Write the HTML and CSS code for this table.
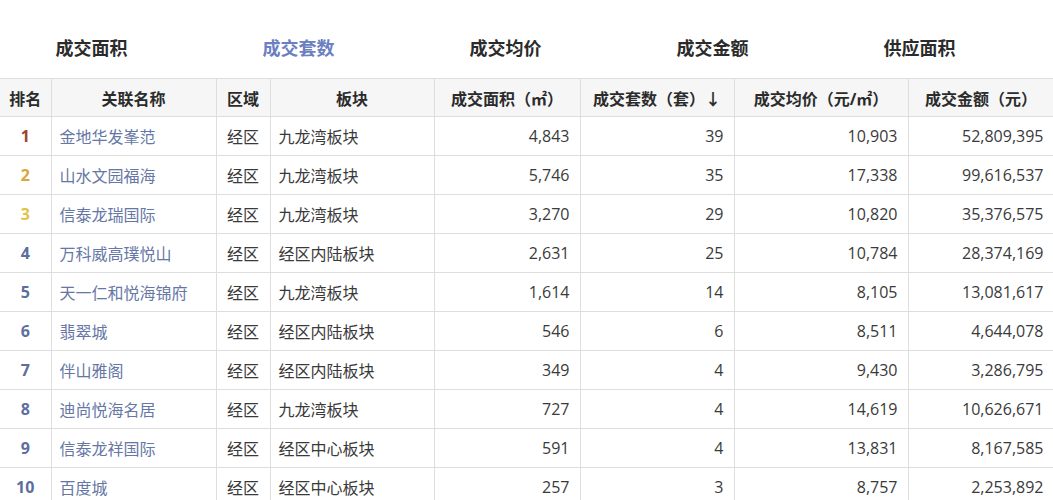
FILE: index.html
```html
<!DOCTYPE html>
<html lang="zh">
<head>
<meta charset="utf-8">
<link rel="stylesheet" href="styles.css">
</head>
<body>
<div class="page">
  <div class="tabs">
    <div class="tab">成交面积</div>
    <div class="tab active">成交套数</div>
    <div class="tab">成交均价</div>
    <div class="tab">成交金额</div>
    <div class="tab">供应面积</div>
  </div>
  <table class="grid">
    <colgroup>
      <col class="c1"><col class="c2"><col class="c3"><col class="c4"><col class="c5"><col class="c6"><col class="c7"><col class="c8">
    </colgroup>
    <thead>
      <tr>
        <th>排名</th><th>关联名称</th><th>区域</th><th>板块</th>
        <th>成交面积（㎡）</th><th>成交套数（套）↓</th><th>成交均价（元/㎡）</th><th>成交金额（元）</th>
      </tr>
    </thead>
    <tbody>
      <tr><td class="rank r1">1</td><td class="name">金地华发峯范</td><td class="area">经区</td><td>九龙湾板块</td><td class="num">4,843</td><td class="num">39</td><td class="num">10,903</td><td class="num">52,809,395</td></tr>
      <tr><td class="rank r2">2</td><td class="name">山水文园福海</td><td class="area">经区</td><td>九龙湾板块</td><td class="num">5,746</td><td class="num">35</td><td class="num">17,338</td><td class="num">99,616,537</td></tr>
      <tr><td class="rank r3">3</td><td class="name">信泰龙瑞国际</td><td class="area">经区</td><td>九龙湾板块</td><td class="num">3,270</td><td class="num">29</td><td class="num">10,820</td><td class="num">35,376,575</td></tr>
      <tr><td class="rank">4</td><td class="name">万科威高璞悦山</td><td class="area">经区</td><td>经区内陆板块</td><td class="num">2,631</td><td class="num">25</td><td class="num">10,784</td><td class="num">28,374,169</td></tr>
      <tr><td class="rank">5</td><td class="name">天一仁和悦海锦府</td><td class="area">经区</td><td>九龙湾板块</td><td class="num">1,614</td><td class="num">14</td><td class="num">8,105</td><td class="num">13,081,617</td></tr>
      <tr><td class="rank">6</td><td class="name">翡翠城</td><td class="area">经区</td><td>经区内陆板块</td><td class="num">546</td><td class="num">6</td><td class="num">8,511</td><td class="num">4,644,078</td></tr>
      <tr><td class="rank">7</td><td class="name">伴山雅阁</td><td class="area">经区</td><td>经区内陆板块</td><td class="num">349</td><td class="num">4</td><td class="num">9,430</td><td class="num">3,286,795</td></tr>
      <tr><td class="rank">8</td><td class="name">迪尚悦海名居</td><td class="area">经区</td><td>九龙湾板块</td><td class="num">727</td><td class="num">4</td><td class="num">14,619</td><td class="num">10,626,671</td></tr>
      <tr><td class="rank">9</td><td class="name">信泰龙祥国际</td><td class="area">经区</td><td>经区中心板块</td><td class="num">591</td><td class="num">4</td><td class="num">13,831</td><td class="num">8,167,585</td></tr>
      <tr><td class="rank">10</td><td class="name">百度城</td><td class="area">经区</td><td>经区中心板块</td><td class="num">257</td><td class="num">3</td><td class="num">8,757</td><td class="num">2,253,892</td></tr>
    </tbody>
  </table>
</div>
</body>
</html>
```
FILE: styles.css
```css
html, body {
  margin: 0;
  padding: 0;
  background: #fff;
  overflow: hidden;
}
body {
  font-family: "Noto Sans", "Noto Sans CJK SC", sans-serif;
  color: #333;
}
.page {
  width: 1053px;
  overflow: hidden;
}
.tabs {
  display: flex;
  height: 78px;
  align-items: center;
  padding-top: 18px;
  box-sizing: border-box;
  margin-left: -12px;
}
.tab {
  width: 207px;
  text-align: center;
  font-size: 18px;
  font-weight: 700;
  color: #2b2b2b;
  line-height: 24px;
  flex: none;
}
.tab.active {
  color: #6b7fc1;
}
.grid {
  border-collapse: collapse;
  table-layout: fixed;
  width: 1054px;
  font-size: 16px;
}
.c1 { width: 51px; }
.c2 { width: 165px; }
.c3 { width: 54px; }
.c4 { width: 164px; }
.c5 { width: 146px; }
.c6 { width: 154px; }
.c7 { width: 174px; }
.c8 { width: 146px; }
.grid th, .grid td {
  border: 1px solid #dedede;
  padding: 0 8px;
  white-space: nowrap;
  overflow: hidden;
  box-sizing: border-box;
}
.grid tr > :first-child {
  border-left: none;
}
.grid th {
  background: #f6f6f6;
  font-weight: 700;
  color: #2b2b2b;
  text-align: center;
  height: 38px;
}
.grid td {
  height: 39px;
  color: #3a3a3a;
}
.grid td.rank {
  text-align: center;
  font-weight: 700;
  color: #5d6d9e;
  font-family: "Open Sans", "Noto Sans", sans-serif;
}
.grid td.r1 { color: #a0432c; }
.grid td.r2 { color: #dba43c; }
.grid td.r3 { color: #e1c34a; }
.grid td.name {
  color: #6677a6;
}
.grid td.area {
  text-align: center;
  padding: 0 4px;
}
.grid td.num {
  text-align: right;
  padding-right: 10px;
  font-family: "Open Sans", "Noto Sans", sans-serif;
  color: #3a3a3a;
}
```
